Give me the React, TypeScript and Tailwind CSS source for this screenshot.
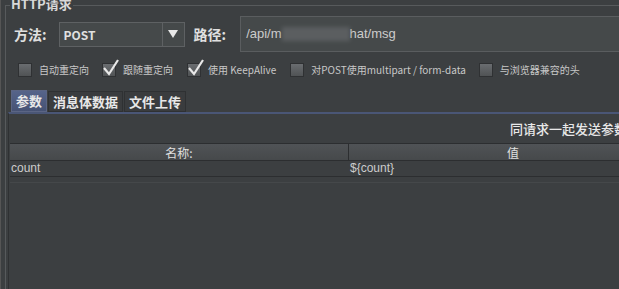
import React from "react";

const font = { fontFamily: '"Noto Sans CJK SC", "Liberation Sans", sans-serif' };
const latin = { fontFamily: '"Liberation Sans", "Noto Sans CJK SC", sans-serif' };

const Check = ({ checked, label }: { checked?: boolean; label: string }) => {
  return (
    <div className="flex items-center">
      <div className="w-[14px] h-[14px] border border-[#2f3133] bg-gradient-to-b from-[#6a6d70] to-[#505355] relative">
        {checked && (
          <svg className="absolute -left-[1px] -top-[5px]" width="18" height="18" viewBox="0 0 18 18">
            <path d="M2 9 L7 15 L16 1" fill="none" stroke="#e8e8e8" strokeWidth="2.2" />
          </svg>
        )}
      </div>
      <span className="ml-[7px] text-[10px] text-[#c8c8c8] whitespace-nowrap">{label}</span>
    </div>
  );
};

const App = () => {
  return (
    <div className="w-[619px] h-[289px] bg-[#3c3f41] overflow-hidden flex" style={font}>
      {/* left edge */}
      <div className="w-[3px] bg-[#2e3032] border-r border-[#555]"></div>
      <div className="flex-1 ml-[4px] mt-[5px] border-l border-t border-[#575a5c] flex flex-col">
        {/* group title */}
        <div className="-mt-[10px] ml-[4px] h-[16px] px-[1px] w-fit bg-[#3c3f41] text-[13px] leading-[16px] text-[#d8d8d8] font-bold">
          HTTP请求
        </div>

        {/* method / path row */}
        <div className="flex items-center mt-[4px] h-[36px]">
          <span className="ml-[8px] text-[14px] text-[#e0e0e0] font-bold">方法:</span>
          <div className="ml-[12px] w-[126px] h-[25px] flex border border-[#5e6163] bg-[#45494a]">
            <div className="flex-1 pl-[4px] text-[12px] leading-[23px] text-[#e0e0e0] font-bold">POST</div>
            <div className="w-[22px] border-l border-[#5e6163] flex items-center justify-center">
              <svg width="10" height="8" viewBox="0 0 10 8">
                <path d="M0 0 L10 0 L5 8 Z" fill="#e8e8e8" />
              </svg>
            </div>
          </div>
          <span className="ml-[9px] text-[14px] text-[#e0e0e0] font-bold">路径:</span>
          <div className="ml-[14px] flex-1 h-[36px] flex items-center border border-[#5a5d5f] bg-[#45494a]" style={latin}>
            <span className="ml-[5px] text-[13px] text-[#cccccc]">/api/m</span>
            <span className="w-[68px] h-[14px] bg-[#6a6d70] opacity-60 blur-[2px]"></span>
            <span className="text-[13px] text-[#cccccc]">hat/msg</span>
          </div>
        </div>

        {/* options */}
        <div className="flex items-center mt-[10px] ml-[12px]">
          <Check label="自动重定向" />
          <div className="ml-[13px]"><Check checked label="跟随重定向" /></div>
          <div className="ml-[14px]"><Check checked label="使用 KeepAlive" /></div>
          <div className="ml-[14px]"><Check label="对POST使用multipart / form-data" /></div>
          <div className="ml-[13px]"><Check label="与浏览器兼容的头" /></div>
        </div>

        {/* tabs */}
        <div className="flex mt-[13px] ml-[5px] h-[22px] items-end">
          <div className="h-[22px] px-[4px] bg-gradient-to-b from-[#56648a] to-[#465274] border border-[#5b6584] text-[13px] leading-[20px] font-bold text-[#e8e8e8]">参数</div>
          <div className="h-[21px] ml-[1px] px-[4px] border border-[#2f3133] bg-[#3a3c3e] text-[13px] leading-[19px] font-bold text-[#e8e8e8]">消息体数据</div>
          <div className="h-[21px] ml-[1px] px-[4px] border border-[#2f3133] bg-[#3a3c3e] text-[13px] leading-[19px] font-bold text-[#e8e8e8]">文件上传</div>
        </div>

        {/* tab panel */}
        <div className="flex-1 ml-[2px] border-t-2 border-l border-t-[#4a5676] border-l-[#2f3133] flex flex-col">
          <div className="h-[29px] pl-[501px] text-[13px] leading-[29px] font-medium text-[#e8e8e8] whitespace-nowrap">
            同请求一起发送参数:
          </div>
          <div className="ml-[1px] w-[700px] border-t border-[#2c2e30]">
            <div className="flex h-[17px] bg-gradient-to-b from-[#505356] to-[#46494b] border-b border-[#2c2e30] text-[12px] leading-[17px] text-[#e0e0e0]">
              <div className="w-[339px] text-center border-r border-[#2c2e30]">名称:</div>
              <div className="w-[328px] text-center">值</div>
            </div>
            <div className="flex h-[16px] border-b border-[#2c2e30] text-[12px] leading-[15px] text-[#cccccc]" style={latin}>
              <div className="w-[340px] pl-[1px]">count</div>
              <div className="w-[328px]">{"${count}"}</div>
            </div>
            <div className="h-[6px] border-b border-[#45484a]"></div>
          </div>
        </div>
      </div>
    </div>
  );
};

export default App;
